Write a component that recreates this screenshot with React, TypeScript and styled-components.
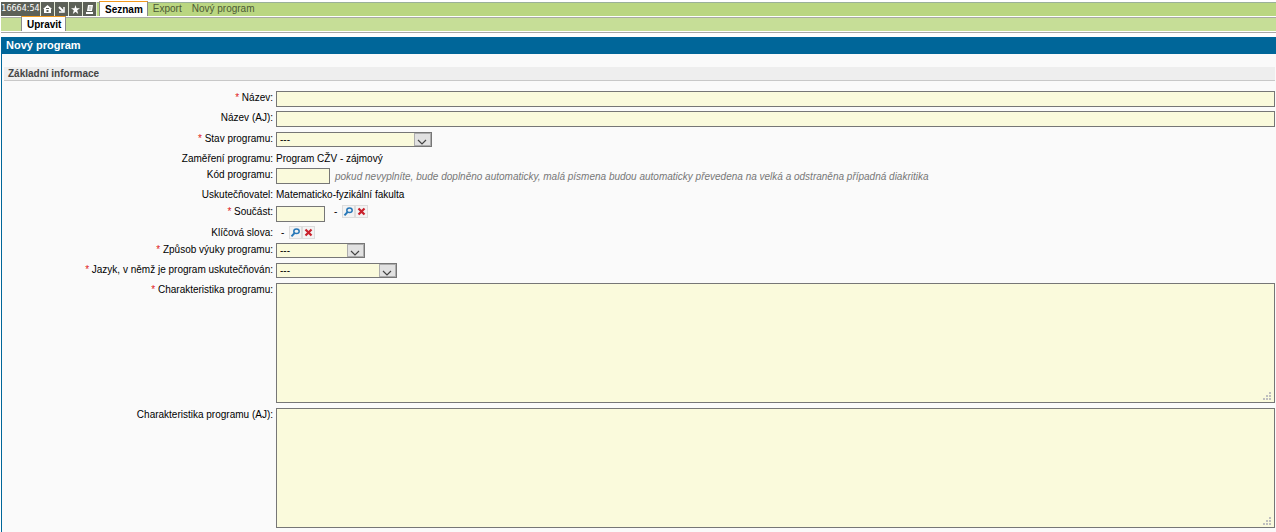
import React, { ReactNode, useId } from "react";
import styled, { createGlobalStyle } from "styled-components";

const GlobalStyle = createGlobalStyle`
  * { box-sizing: border-box; }
  body {
    margin: 0;
    background: #fff;
    color: #000;
    font-family: "Liberation Sans", Arial, sans-serif;
    font-size: 10px;
    line-height: 13px;
  }
`;

const Page = styled.div`
  padding: 1px 0 0 1px;
`;

const MainBar = styled.nav`
  display: flex;
  align-items: flex-end;
  height: 15px;
  background: linear-gradient(#9bb09a 0 1px, #bad681 1px) 0 1px no-repeat;
`;

const Tools = styled.div`
  display: flex;
  gap: 1px;
  height: 14px;
  padding-right: 1px;
  margin-right: 2px;
  background: #e4ead8;
`;

const Timer = styled.span`
  width: 39px;
  background: #5c6058;
  color: #fff;
  font: 8px/14px "DejaVu Sans", sans-serif;
  text-align: center;
  white-space: nowrap;
`;

const ToolButton = styled.button`
  display: flex;
  align-items: center;
  justify-content: center;
  width: 13px;
  height: 14px;
  padding: 0;
  border: 0;
  background: #5c6058;
  color: #fff;
`;

const Tab = styled.a<{ $active?: boolean }>`
  padding: ${(p) => (p.$active ? "0 4px 0 5px" : "0 5px")};
  height: 15px;
  border: 0 solid #8a8a8a;
  border-width: ${(p) => (p.$active ? "1px 1px 0" : "0")};
  border-top-color: #f29a1f;
  background: ${(p) => (p.$active ? "#fff" : "transparent")};
  color: ${(p) => (p.$active ? "#000" : "#4d5a36")};
  font-weight: ${(p) => (p.$active ? "bold" : "normal")};
  line-height: ${(p) => (p.$active ? "15px" : "16px")};
  text-decoration: none;
  white-space: nowrap;
`;

const SubBar = styled.nav`
  display: flex;
  height: 17px;
  padding-left: 20px;
  background:
    linear-gradient(#a8aaa4 0 1px, #c6de97 1px 14px, #fff 14px 15px, #a8a8a8 15px 16px, #fff 16px) 0 1px no-repeat;
`;

const Title = styled.h1`
  margin: 4px 0 0;
  padding: 0 5px;
  background: #006699;
  color: #fff;
  font-size: 11px;
  line-height: 17px;
`;

const Panel = styled.main`
  min-height: calc(100vh - 54px);
  padding: 13px 1px 4px 0;
  border-left: 1px solid #006699;
  background: #fafafa;
`;

const Heading = styled.h2`
  margin: 0 0 10px 2px;
  padding: 0 4px;
  border-bottom: 1px solid #c8c8c8;
  background: #eee;
  color: #444;
  font-size: 10px;
  line-height: 13px;
`;

const Form = styled.form`
  display: flex;
  flex-direction: column;
  gap: 4px;
`;

const Row = styled.div<{ $height: number }>`
  display: grid;
  grid-template-columns: 271px minmax(0, 1fr);
  column-gap: 3px;
  height: ${(p) => p.$height}px;
`;

const LabelCell = styled.div`
  text-align: right;
  white-space: nowrap;
`;

const Star = styled.span`
  color: #e02020;
`;

const ControlCell = styled.div`
  display: flex;
  align-items: flex-start;
  white-space: nowrap;
`;

const TextInput = styled.input<{ $width?: string }>`
  width: ${(p) => p.$width ?? "100%"};
  height: 16px;
  padding: 0 3px;
  border: 1px solid #767676;
  border-radius: 0;
  background: #fafadc;
  font: inherit;
`;

const LookupInput = styled(TextInput)`
  align-self: flex-end;
`;

const SelectBox = styled.span<{ $width: string }>`
  position: relative;
  display: flex;
  width: ${(p) => p.$width};
`;

const Select = styled.select`
  appearance: none;
  width: 100%;
  height: 15px;
  padding: 0 20px 0 3px;
  border: 1px solid #767676;
  border-radius: 0;
  background: #fafadc;
  color: #000;
  font: inherit;
`;

const SelectArrow = styled.svg`
  position: absolute;
  top: 1px;
  right: 1px;
  pointer-events: none;
`;

const AreaBox = styled.div`
  position: relative;
  display: flex;
  width: 100%;
`;

const TextArea = styled.textarea`
  width: 100%;
  height: 120px;
  padding: 2px;
  border: 1px solid #767676;
  border-radius: 0;
  background: #fafadc;
  font: inherit;
  resize: none;
`;

const Grip = styled.svg`
  position: absolute;
  right: 4px;
  bottom: 3px;
  pointer-events: none;
`;

const Hint = styled.em`
  padding: 2px 0 0 5px;
  color: #777;
`;

const LookupTools = styled.span<{ $inset: number }>`
  display: flex;
  padding-left: ${(p) => p.$inset}px;
`;

const Dash = styled.span`
  width: 8px;
`;

const IconButton = styled.button`
  display: flex;
  width: 13px;
  height: 13px;
  padding: 0;
  border: 1px solid #ddd;
  background: #f3f3f3;
`;

function Field(props: { label: string; height: number; required?: boolean; children: (id: string) => ReactNode }) {
  const id = useId();
  return (
    <Row $height={props.height}>
      <LabelCell>
        {props.required && <Star>* </Star>}
        <label htmlFor={id}>{props.label}:</label>
      </LabelCell>
      <ControlCell>{props.children(id)}</ControlCell>
    </Row>
  );
}

function DropDown({ id, width }: { id: string; width: string }) {
  return (
    <SelectBox $width={width}>
      <Select id={id}>
        <option>---</option>
      </Select>
      <SelectArrow width="17" height="13" viewBox="0 0 17 13">
        <rect width="17" height="13" fill="#e1e1e1" />
        <path d="M.5 0v13M0 .5h17M16.500 0v13M0 12.500h17" stroke="#adadad" />
        <path d="M4 7l4 4 4-4" fill="none" stroke="#444" strokeWidth="1.200" />
      </SelectArrow>
    </SelectBox>
  );
}

function Area({ id }: { id: string }) {
  return (
    <AreaBox>
      <TextArea id={id} />
      <Grip width="8" height="8" viewBox="0 0 8 8" fill="#bfbfbf">
        <path d="M6 0h2v2h-2zM3 3h2v2h-2zM6 3h2v2h-2zM0 6h2v2h-2zM3 6h2v2h-2zM6 6h2v2h-2z" />
      </Grip>
    </AreaBox>
  );
}

function Lookup({ id, inset }: { id?: string; inset: number }) {
  return (
    <LookupTools $inset={inset}>
      <Dash>-</Dash>
      <IconButton type="button" id={id} aria-label="Vyhledat">
        <svg width="11" height="11" viewBox="0 0 11 11" fill="none" stroke="#2878b8">
          <ellipse cx="6.500" cy="4.300" rx="2.700" ry="2.300" strokeWidth="1.500" />
          <path d="M4.600 6L1.500 9.300" strokeWidth="1.900" />
        </svg>
      </IconButton>
      <IconButton type="button" aria-label="Smazat">
        <svg width="11" height="11" viewBox="0 0 11 11" stroke="#c9202b" strokeWidth="2.200">
          <path d="M2.500 2.500l6 6M8.500 2.500l-6 6" />
        </svg>
      </IconButton>
    </LookupTools>
  );
}

export default function App() {
  return (
    <Page>
      <GlobalStyle />
      <MainBar>
        <Tools>
          <Timer>16664:54</Timer>
          <ToolButton aria-label="Domů">
            <svg width="9" height="8" viewBox="0 0 9 8" fill="currentColor">
              <path d="M4.500 0L9 4H8V8H1V4H0z" />
              <path d="M3 3h3v1H3zM3.500 5h2v2h-2z" fill="#5c6058" />
            </svg>
          </ToolButton>
          <ToolButton aria-label="Přejít">
            <svg width="7" height="7" viewBox="0 0 7 7" fill="none" stroke="currentColor">
              <path d="M1 1l4 4" strokeWidth="2" />
              <path d="M6 1v5H1" strokeWidth="1.500" />
            </svg>
          </ToolButton>
          <ToolButton aria-label="Oblíbené">
            <svg width="9" height="9" viewBox="0 0 9 9" fill="currentColor">
              <path d="M4.500 0l1 3.200H9L6.200 5.300 7.200 9 4.500 6.800 1.800 9l1-3.700L0 3.200h3.500z" />
            </svg>
          </ToolButton>
          <ToolButton aria-label="Tisk">
            <svg width="9" height="9" viewBox="0 0 9 9" fill="currentColor">
              <path d="M3 0h5L7 6H2zM1 7h7v2H1z" />
              <path d="M4 2h2.500M3.700 4h2.500" stroke="#8b8f87" strokeWidth=".8" />
            </svg>
          </ToolButton>
        </Tools>
        <Tab href="#seznam" $active>Seznam</Tab>
        <Tab href="#export">Export</Tab>
        <Tab href="#novy">Nový program</Tab>
      </MainBar>
      <SubBar>
        <Tab href="#upravit" $active>Upravit</Tab>
      </SubBar>
      <Title>Nový program</Title>
      <Panel>
        <Heading>Základní informace</Heading>
        <Form>
          <Field label="Název" height={16} required>{(id) => <TextInput id={id} />}</Field>
          <Field label="Název (AJ)" height={17}>{(id) => <TextInput id={id} />}</Field>
          <Field label="Stav programu" height={16} required>{(id) => <DropDown id={id} width="156px" />}</Field>
          <Field label="Zaměření programu" height={12}>{(id) => <output id={id}>Program CŽV - zájmový</output>}</Field>
          <Field label="Kód programu" height={16}>
            {(id) => (
              <>
                <TextInput id={id} $width="54px" />
                <Hint>
                  pokud nevyplníte, bude doplněno automaticky, malá písmena budou automaticky převedena na velká a odstraněna případná diakritika
                </Hint>
              </>
            )}
          </Field>
          <Field label="Uskutečňovatel" height={13}>{(id) => <output id={id}>Matematicko-fyzikální fakulta</output>}</Field>
          <Field label="Součást" height={17} required>
            {(id) => (
              <>
                <LookupInput id={id} $width="49px" />
                <Lookup inset={9} />
              </>
            )}
          </Field>
          <Field label="Klíčová slova" height={13}>{(id) => <Lookup id={id} inset={5} />}</Field>
          <Field label="Způsob výuky programu" height={16} required>{(id) => <DropDown id={id} width="89px" />}</Field>
          <Field label="Jazyk, v němž je program uskutečňován" height={16} required>{(id) => <DropDown id={id} width="121px" />}</Field>
          <Field label="Charakteristika programu" height={121} required>{(id) => <Area id={id} />}</Field>
          <Field label="Charakteristika programu (AJ)" height={120}>{(id) => <Area id={id} />}</Field>
        </Form>
      </Panel>
    </Page>
  );
}
